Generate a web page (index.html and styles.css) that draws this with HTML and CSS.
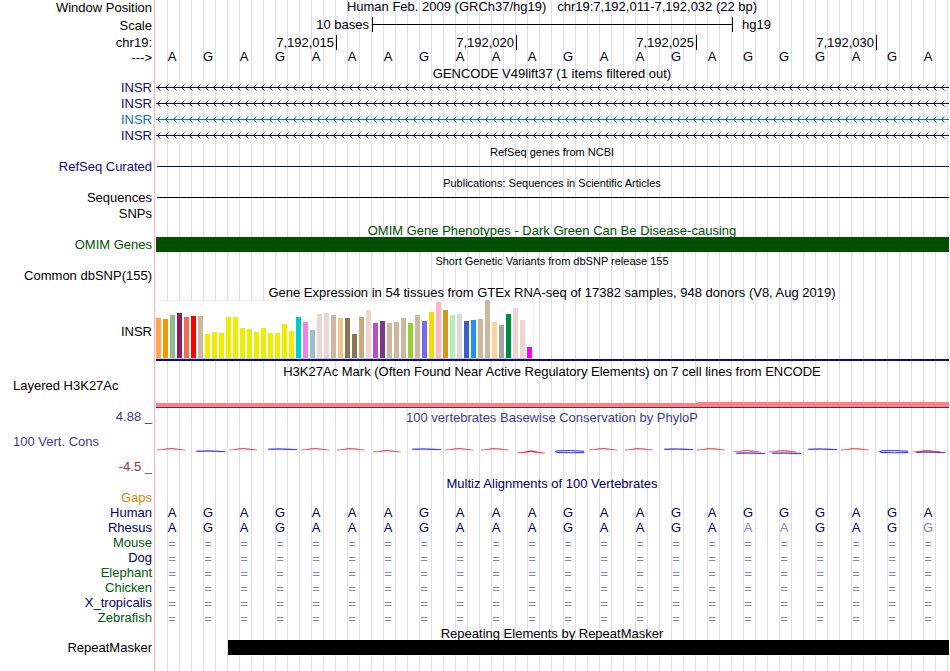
FILE: index.html
```html
<!DOCTYPE html>
<html lang="en">
<head>
<meta charset="utf-8">
<title>Genome Browser chr19:7,192,011-7,192,032</title>
<link rel="stylesheet" href="styles.css">
</head>
<body>
<svg class="defs" width="0" height="0" aria-hidden="true">
  <defs>
    <pattern id="intron" class="navy" width="8" height="16" patternUnits="userSpaceOnUse">
      <path class="chevron" d="M4.500 4.500L1.500 7.500L4.500 10.500"/>
    </pattern>
    <pattern id="intronAzure" class="azure" width="8" height="16" patternUnits="userSpaceOnUse">
      <path class="chevron" d="M4.500 4.500L1.500 7.500L4.500 10.500"/>
    </pattern>
    <path id="baseA" d="M1 2Q7 1.500 10 .8Q15 .2 20 .8Q24 1.500 29 2Q23 1.800 20 1.300Q15 .8 10 1.300Q7 1.800 1 2Z"/>
    <path id="baseATall" d="M1 3Q8 2.300 11 1.300Q15 .2 19 1.300Q23 2.500 29 3Q22 3.200 19 2.200Q15 1.300 11 2.200Q7 3.200 1 3Z"/>
    <path id="baseG" d="M33 1.200Q20 .3 5 .8Q2 1.300 6 1.700Q20 1.300 33 2Z"/>
    <path id="baseGOpen" d="M32 1.200Q18 .2 6 .8Q1 1.700 6 2.500Q18 3 32 2.600V2"/>
  </defs>
</svg>
<main class="browser">
  <div class="row"><div class="label middle">Window Position</div><div class="plot title top"><span>Human Feb. 2009 (GRCh37/hg19) &nbsp; chr19:7,192,011-7,192,032 (22 bp)</span></div></div>
  <div class="row tall"><div class="label end">Scale</div><div class="plot scale"><span class="bases">10 bases</span><span class="ruler"></span><span class="assembly">hg19</span></div></div>
  <div class="row tall"><div class="label end">chr19:</div><div class="plot ticks"><span>7,192,015</span><span>7,192,020</span><span>7,192,025</span><span>7,192,030</span></div></div>
  <div class="row short"><div class="label">---&gt;</div><div class="plot seq black" data-seq="AGAGAAAGAAAGAAGAGGGAGA"></div></div>

  <div class="row short"><div class="label"></div><div class="plot title low">GENCODE V49lift37 (1 items filtered out)</div></div>
  <div class="row navy"><div class="label">INSR</div><div class="plot"><svg class="gene"><rect width="100%" height="16" fill="url(#intron)"/><rect class="stem" y="7" width="100%" height="1"/></svg></div></div>
  <div class="row navy"><div class="label">INSR</div><div class="plot"><svg class="gene"><rect width="100%" height="16" fill="url(#intron)"/><rect class="stem" y="7" width="100%" height="1"/></svg></div></div>
  <div class="row azure"><div class="label">INSR</div><div class="plot"><svg class="gene"><rect width="100%" height="16" fill="url(#intronAzure)"/><rect class="stem" y="7" width="100%" height="1"/></svg></div></div>
  <div class="row navy"><div class="label">INSR</div><div class="plot"><svg class="gene"><rect width="100%" height="16" fill="url(#intron)"/><rect class="stem" y="7" width="100%" height="1"/></svg></div></div>

  <div class="row short"><div class="label"></div><div class="plot title small low">RefSeq genes from NCBI</div></div>
  <div class="row navy"><div class="label">RefSeq Curated</div><div class="plot"><div class="line"></div></div></div>
  <div class="row short"><div class="label"></div><div class="plot title small low">Publications: Sequences in Scientific Articles</div></div>
  <div class="row"><div class="label">Sequences</div><div class="plot"><div class="line"></div></div></div>
  <div class="row"><div class="label">SNPs</div><div class="plot"></div></div>
  <div class="row short green"><div class="label"></div><div class="plot title low">OMIM Gene Phenotypes - Dark Green Can Be Disease-causing</div></div>
  <div class="row green"><div class="label">OMIM Genes</div><div class="plot"><div class="block omim"></div></div></div>
  <div class="row short"><div class="label"></div><div class="plot title small low">Short Genetic Variants from dbSNP release 155</div></div>
  <div class="row"><div class="label">Common dbSNP(155)</div><div class="plot"></div></div>

  <div class="row"><div class="label"></div><div class="plot title">Gene Expression in 54 tissues from GTEx RNA-seq of 17382 samples, 948 donors (V8, Aug 2019)</div></div>
  <div class="row expression"><div class="label middle">INSR</div><div class="plot"><div class="bars" id="gtex"></div><div class="model"></div></div></div>

  <div class="row short"><div class="label"></div><div class="plot title">H3K27Ac Mark (Often Found Near Active Regulatory Elements) on 7 cell lines from ENCODE</div></div>
  <div class="row histone"><div class="label left">Layered H3K27Ac</div><div class="plot"><div class="signal"><span></span><span class="higher"></span></div></div></div>

  <div class="row short violet"><div class="label tight">4.88 _</div><div class="plot title">100 vertebrates Basewise Conservation by PhyloP</div></div>
  <div class="row conservation violet"><div class="label stacked"><span class="name">100 Vert. Cons</span><span class="minimum">-4.5 _</span></div><div class="plot"><svg class="phylop" id="phylop" viewBox="0 0 792 50" preserveAspectRatio="none"></svg></div></div>

  <div class="row short"><div class="label"></div><div class="plot title low deep">Multiz Alignments of 100 Vertebrates</div></div>
  <div class="row short orange"><div class="label">Gaps</div><div class="plot"></div></div>
  <div class="row short species"><div class="label">Human</div><div class="plot seq" data-seq="AGAGAAAGAAAGAAGAGGGAGA"></div></div>
  <div class="row short species"><div class="label">Rhesus</div><div class="plot seq" data-seq="AGAGAAAGAAAGAAGAaaGAGg"></div></div>
  <div class="row short species alt"><div class="label">Mouse</div><div class="plot seq gaps" data-seq="======================"></div></div>
  <div class="row short species"><div class="label">Dog</div><div class="plot seq gaps" data-seq="======================"></div></div>
  <div class="row short species alt"><div class="label">Elephant</div><div class="plot seq gaps" data-seq="======================"></div></div>
  <div class="row short species alt"><div class="label">Chicken</div><div class="plot seq gaps" data-seq="======================"></div></div>
  <div class="row short species"><div class="label">X_tropicalis</div><div class="plot seq gaps" data-seq="======================"></div></div>
  <div class="row short species alt"><div class="label">Zebrafish</div><div class="plot seq gaps" data-seq="======================"></div></div>

  <div class="row short"><div class="label"></div><div class="plot title low">Repeating Elements by RepeatMasker</div></div>
  <div class="row short"><div class="label">RepeatMasker</div><div class="plot repeats"><div class="block repeat"></div></div></div>
  <div class="row rest"><div class="label"></div><div class="plot"></div></div>
</main>
<script src="tracks.js"></script>
</body>
</html>
```
FILE: styles.css
```css
* { box-sizing: border-box; }

body {
  margin: 0;
  background: #fff;
  color: #000;
  font: 13px/15px "Liberation Sans", Arial, Helvetica, sans-serif;
}

.defs { position: absolute; }

.browser {
  display: flex;
  flex-direction: column;
  min-height: 100vh;
}

.row {
  display: grid;
  grid-template-columns: 155px 1fr;
  min-height: 16px;
  padding-right: 2px;
}
.short { min-height: 15px; }
.tall { min-height: 17px; }
.expression { min-height: 64px; }
.histone { min-height: 31px; }
.conservation { min-height: 50px; }
.rest { flex: 1; min-height: 0; }

.label {
  display: flex;
  align-items: flex-start;
  justify-content: flex-end;
  padding-right: 2px;
  border-right: 1px solid #ffb4b4;
  white-space: nowrap;
}
.label.middle { align-items: center; line-height: 14px; padding-bottom: 1px; }
.label.end { align-items: flex-end; }
.label.tight { line-height: 13px; }
.label.left {
  justify-content: flex-start;
  padding-left: 13px;
  line-height: 13px;
}
.label.stacked {
  flex-direction: column;
  align-items: stretch;
  justify-content: space-between;
  padding: 9px 2px 1px 13px;
}
.minimum { text-align: right; color: #8c3c3c; }

/* One guide line every third of a base, 22 bases across */
.plot {
  min-width: 0;
  margin-left: 1px;
  background: linear-gradient(to left, #dcdcfa 1px, transparent 1px) 0 0 / calc(100% / 66) 100%;
}

.title {
  display: flex;
  align-items: center;
  justify-content: center;
  white-space: nowrap;
}
.title.low { line-height: 13px; padding-top: 2px; }
.title.top { align-items: flex-start; line-height: 14px; }
.small { font-size: 11px; }

.navy { color: #0c0c78; }
.azure { color: #1470b4; }
.green { color: #005000; }
.violet { color: #3c3c8c; }
.orange { color: #e08200; }
.deep { color: #000064; }

.scale {
  display: grid;
  grid-template-columns: 6fr 10fr 6fr;
  align-items: center;
}
.bases { text-align: right; padding-right: 3px; }
.ruler {
  height: 15px;
  margin-right: -1px;
  border: solid #000;
  border-width: 0 1px;
  background: linear-gradient(#000, #000) 0 7px / 100% 1px no-repeat;
}
.assembly { padding-left: 10px; }

.ticks {
  display: grid;
  grid-template-columns: repeat(4, 5fr) 2fr;
  align-items: end;
}
.ticks span {
  margin-right: -1px;
  padding-right: 2px;
  border-right: 1px solid #000;
  text-align: right;
}

.seq {
  display: grid;
  grid-template-columns: repeat(22, 1fr);
  align-items: center;
  text-align: center;
  color: #000064;
}
.seq.black { color: #000; align-items: start; line-height: 13px; }
.seq.gaps { line-height: 13px; padding-top: 2px; }
.seq span { padding-right: 4px; }
.seq .faint { color: #8484b8; }
.species .label { color: #000064; }
.species.alt .label { color: #005a0a; }

.gene {
  display: block;
  width: calc(100% + 1px);
  height: 16px;
}
.stem { fill: currentColor; }
.chevron { fill: none; stroke: currentColor; stroke-width: 1; }

.line {
  height: 1px;
  margin: 7px -1px 0 1px;
  background: currentColor;
}

.block { height: 15px; margin-right: -1px; }
.omim { background: #005000; }
.repeats { display: grid; grid-template-columns: 2fr 20fr; }
.repeat { grid-column: 2; background: #000; }

.bars {
  display: flex;
  align-items: flex-end;
  gap: 2px;
  width: 378px;
  height: 59px;
  background: #fff;
  border: 1px solid #eee;
  border-left: 0;
  border-bottom-color: #ccc;
}
.bars span { width: 5px; margin-top: -1px; flex: none; }
.model { height: 2px; margin-right: -1px; background: #0c0c78; }

.histone .plot { display: flex; flex-direction: column; padding-bottom: 2px; }
.signal {
  display: grid;
  grid-template-columns: 15fr 7fr;
  align-items: end;
  margin: auto -1px 0 0;
  border-bottom: 1px solid #5a2850;
}
.signal span { height: 4px; background: #ff8080; }
.signal .higher { height: 5px; }

.phylop { display: block; width: 100%; height: 50px; }
.phylop .a { fill: #f00; stroke: #f00; stroke-width: 0.3; }
.phylop .g { fill: #22f; stroke: #22f; stroke-width: 0.2; }
.phylop .open { fill: none; stroke: #22f; stroke-width: 1; }
```
FILE: tracks.js
```js
// Bases and alignments; a lower-case letter marks a mismatch.
document.querySelectorAll('.seq').forEach(function (row) {
  Array.from(row.dataset.seq).forEach(function (base) {
    var cell = document.createElement('span');
    cell.textContent = base.toUpperCase();
    if (base === '=' || base !== base.toUpperCase()) cell.className = 'faint';
    row.appendChild(cell);
  });
});

// Median expression per tissue: height and colour.
var heights = [40,39,43,45,41,42,42,24,26,25,41,41,30,29,26,30,25,25,34,27,41,36,28,44,45,43,40,
  40,24,41,48,35,37,35,36,40,35,43,37,46,56,48,43,44,37,38,39,58,36,33,44,50,38,11];
var colours = ('ffa54f ee9a00 8fbc8f 8b1c62 ee6a50 ff0000 cdb79e ' + 'eeee00 '.repeat(13) +
  '00cdcd ee82ee 9ac0cd eed5d2 eed5d2 cdb79e eec591 8b7355 8b7355 cdaa7d eed5d2 b452cd 7a378b ' +
  'cdb79e cdb79e cdb79e 9acd32 cdb79e 7a67ee ffd700 ffb6c1 cd9b1d b4eeb4 d9d9d9 3a5fcd 1e90ff ' +
  'cdb79e cdb79e ffd39b a6a6a6 008b45 eed5d2 eed5d2 ff00ff').split(' ');
heights.forEach(function (h, i) {
  var bar = document.createElement('span');
  bar.style.height = h + 'px';
  bar.style.background = '#' + colours[i];
  document.getElementById('gtex').appendChild(bar);
});

// Conservation logo: [base index, glyph, class, top].
var logo = [];
[0, 2, 4, 5, 8, 9, 12, 13, 15, 19].forEach(function (i) { logo.push([i, 'baseA', 'a', 23]); });
[3, 7, 14, 18].forEach(function (i) { logo.push([i, 'baseG', 'g', 23]); });
logo.push([1, 'baseG', 'g', 25], [6, 'baseA', 'a', 25], [10, 'baseATall', 'a', 25],
  [11, 'baseGOpen', 'open', 25], [16, 'baseG', 'g', 27], [16, 'baseA', 'a', 25],
  [17, 'baseG', 'g', 27], [17, 'baseA', 'a', 25], [20, 'baseGOpen', 'open', 25],
  [21, 'baseG', 'g', 26], [21, 'baseA', 'a', 25]);
document.getElementById('phylop').innerHTML = logo.map(function (g) {
  return '<use href="#' + g[1] + '" class="' + g[2] + '" x="' + g[0] * 36 + '" y="' + g[3] + '"/>';
}).join('');
```
